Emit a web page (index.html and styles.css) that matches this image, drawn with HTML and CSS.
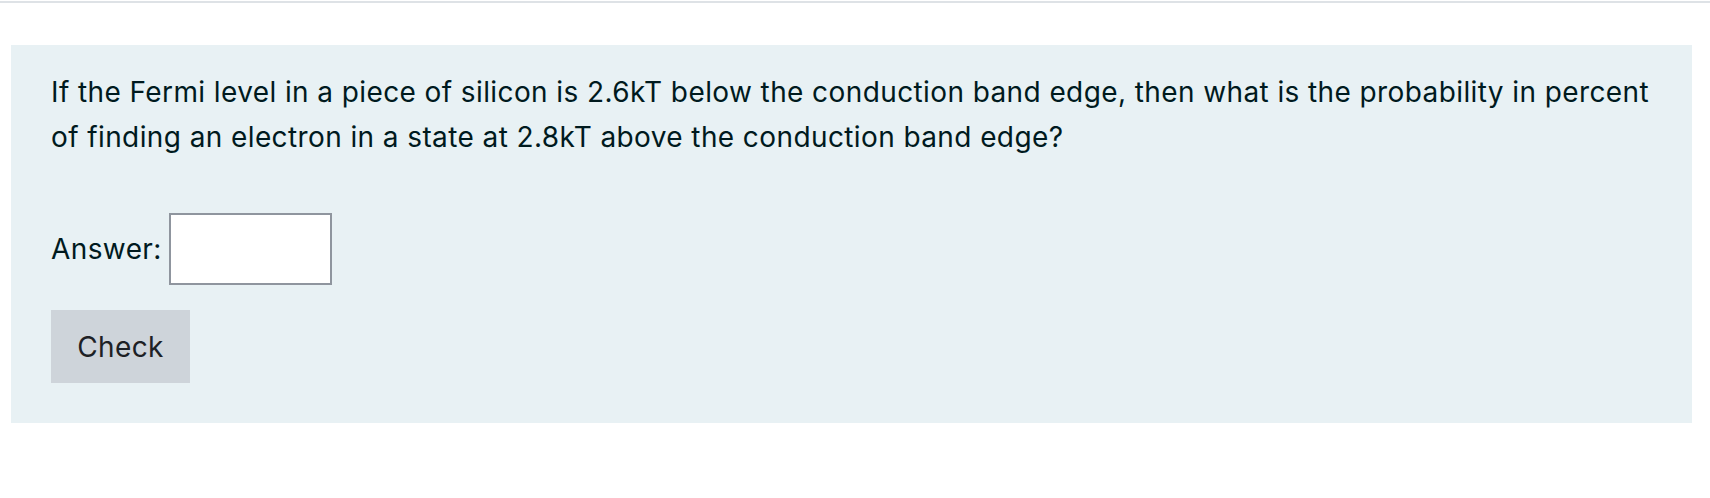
FILE: index.html
```html
<!DOCTYPE html>
<html lang="en">
<head>
<meta charset="utf-8">
<title>Question</title>
<link rel="stylesheet" href="styles.css">
</head>
<body>
<div class="topline"></div>
<div class="page">
  <div class="formulation">
    <p class="qtext">If the Fermi level in a piece of silicon is 2.6kT below the conduction band edge, then what is the probability in percent of finding an electron in a state at 2.8kT above the conduction band edge?</p>
    <div class="answer">
      <label class="answer-label" for="ans">Answer:</label>
      <input class="answer-input" id="ans" type="text">
    </div>
    <button class="check-btn" type="button">Check</button>
  </div>
</div>
</body>
</html>
```
FILE: styles.css
```css
html, body {
  margin: 0;
  padding: 0;
  background: #ffffff;
}
body {
  font-family: Inter, "Noto Sans", "Liberation Sans", sans-serif;
  color: #001a1e;
  letter-spacing: 0.4px;
}
.topline {
  margin-top: 1px;
  height: 2px;
  background: #dee2e6;
}
.page {
  padding: 42px 18px 0 11px;
}
.formulation {
  background: #e8f1f4;
  padding: 25px 40px 40px 40px;
}
.qtext {
  margin: 0;
  font-size: 28px;
  line-height: 45px;
}
.answer {
  display: flex;
  align-items: center;
  gap: 7px;
  margin-top: 53px;
}
.answer-label {
  font-size: 28px;
  line-height: 43px;
}
.answer-input {
  box-sizing: border-box;
  width: 163px;
  height: 72px;
  border: 2px solid #8f959e;
  background: #ffffff;
  margin: 0;
  padding: 0 12px;
  font: inherit;
  font-size: 28px;
}
.check-btn {
  display: block;
  margin-top: 25px;
  box-sizing: border-box;
  width: 139px;
  height: 73px;
  border: 0;
  background: #ced4da;
  color: #1d2125;
  font-family: inherit;
  letter-spacing: 0.4px;
  font-size: 28px;
  padding: 0;
}
```
